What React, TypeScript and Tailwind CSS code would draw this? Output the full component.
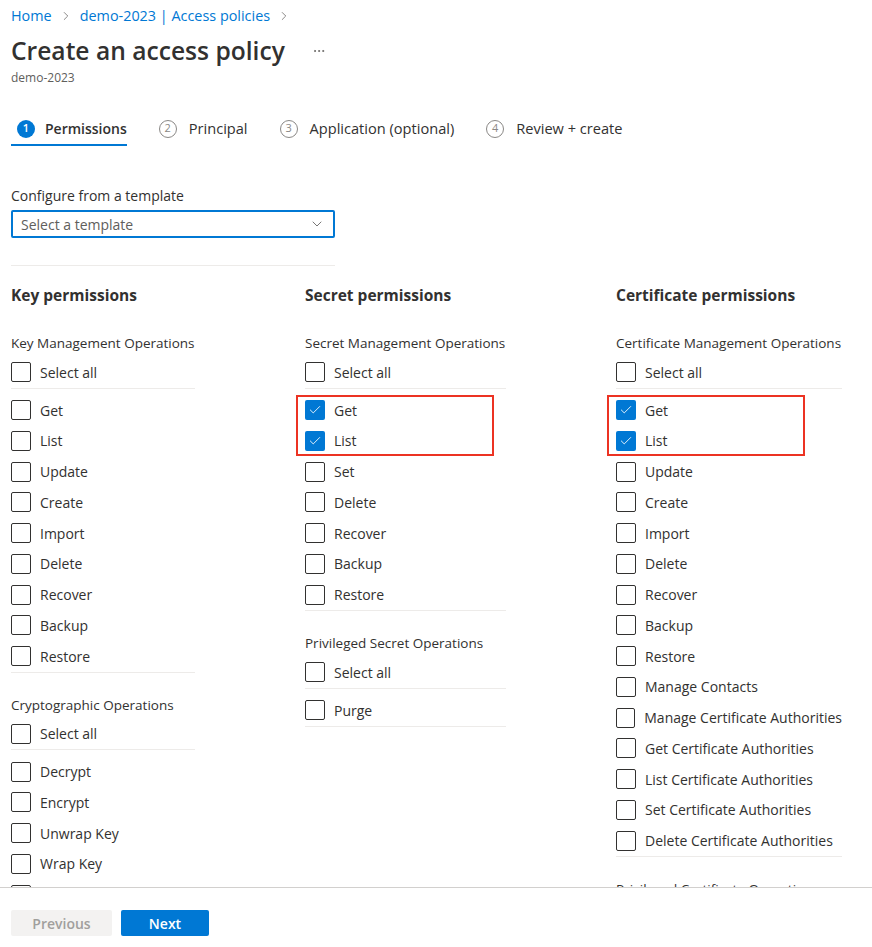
import { Check, ChevronDown, ChevronRight, Ellipsis } from 'lucide-react';

interface Group {
  label: string;
  items: string[];
}

interface Column {
  title: string;
  width: string;
  groups: Group[];
}

const checked = new Set(['Secret permissions/Get', 'Secret permissions/List', 'Certificate permissions/Get', 'Certificate permissions/List']);

const columns: Column[] = [
  {
    title: 'Key permissions',
    width: 'w-[184px]',
    groups: [
      {
        label: 'Key Management Operations',
        items: ['Get', 'List', 'Update', 'Create', 'Import', 'Delete', 'Recover', 'Backup', 'Restore'],
      },
      {
        label: 'Cryptographic Operations',
        items: ['Decrypt', 'Encrypt', 'Unwrap Key', 'Wrap Key', 'Verify', 'Sign'],
      },
    ],
  },
  {
    title: 'Secret permissions',
    width: 'w-[201px]',
    groups: [
      {
        label: 'Secret Management Operations',
        items: ['Get', 'List', 'Set', 'Delete', 'Recover', 'Backup', 'Restore'],
      },
      { label: 'Privileged Secret Operations', items: ['Purge'] },
    ],
  },
  {
    title: 'Certificate permissions',
    width: 'w-[226px]',
    groups: [
      {
        label: 'Certificate Management Operations',
        items: [
          'Get',
          'List',
          'Update',
          'Create',
          'Import',
          'Delete',
          'Recover',
          'Backup',
          'Restore',
          'Manage Contacts',
          'Manage Certificate Authorities',
          'Get Certificate Authorities',
          'List Certificate Authorities',
          'Set Certificate Authorities',
          'Delete Certificate Authorities',
        ],
      },
      { label: 'Privileged Certificate Operations', items: ['Purge'] },
    ],
  },
];

const tabs = ['Permissions', 'Principal', 'Application (optional)', 'Review + create'];

const Checkbox = ({ label, on }: { label: string; on?: boolean }) => (
  <div className="flex h-[30.75px] items-center gap-[9px]">
    {on ? (
      <span className="flex h-5 w-5 items-center justify-center rounded-[2px] bg-[#0078d4]">
        <Check className="h-[14px] w-[14px] text-white" strokeWidth={1.5} />
      </span>
    ) : (
      <span className="h-5 w-5 rounded-[2px] border border-[#323130] bg-white" />
    )}
    <span className="whitespace-nowrap">{label}</span>
  </div>
);

const PermissionColumn = ({ col }: { col: Column }) => (
  <div className={`${col.width} shrink-0`}>
    <h2 className="h-[22px] text-[15.5px] font-bold leading-[22px] whitespace-nowrap">{col.title}</h2>
    {col.groups.map((g, gi) => (
      <div key={g.label} className={gi === 0 ? 'mt-[27px]' : 'mt-[22px]'}>
        <div className="h-5 text-[13.5px] leading-5 whitespace-nowrap">{g.label}</div>
        <div className="mt-[4px] border-b border-[#edebe9]">
          <Checkbox label="Select all" />
        </div>
        <div className="mt-[6px] border-b border-[#edebe9]">
          {g.items.map((item, i) => {
            // Get + List are boxed together in the screenshot
            if (i === 1 && checked.has(`${col.title}/${item}`)) return null;
            if (i === 0 && checked.has(`${col.title}/${item}`)) {
              return (
                <div key={item} className="relative">
                  <Checkbox label={item} on />
                  <Checkbox label={g.items[1]} on />
                  <div className="pointer-events-none absolute -left-[9px] top-0 h-full w-[198px] border-2 border-[#ec3323]" />
                </div>
              );
            }
            return <Checkbox key={item} label={item} />;
          })}
        </div>
      </div>
    ))}
  </div>
);

export default function App() {
  return (
    <div className="flex h-[947px] flex-col overflow-hidden bg-white font-['Open_Sans',sans-serif] text-[14px] text-[#323130]">
      <div className="flex-1 overflow-hidden pl-[11px]">
        {/* Breadcrumb */}
        <div className="mt-[6px] flex h-5 items-center text-[14.4px] text-[#0078d4]">
          <span>Home</span>
          <ChevronRight className="mx-[7px] h-[14px] w-[14px] text-[#605e5c]" strokeWidth={1.25} />
          <span>demo-2023 | Access policies</span>
          <ChevronRight className="mx-[7px] h-[14px] w-[14px] text-[#605e5c]" strokeWidth={1.25} />
        </div>

        {/* Title */}
        <div className="mt-[9px] flex h-8 items-center">
          <h1 className="text-[24.6px] font-semibold leading-8">Create an access policy</h1>
          <Ellipsis className="ml-[27px] h-[14px] w-[14px] text-[#605e5c]" strokeWidth={1.5} />
        </div>
        <div className="mt-[3px] h-4 text-[12px] leading-4 text-[#605e5c]">demo-2023</div>

        {/* Wizard tabs */}
        <div className="mt-[27px] flex gap-[26px]">
          {tabs.map((t, i) => (
            <div key={t} className="flex flex-col">
              <div className={`flex h-[31px] items-center pl-[6px] ${i === 0 ? 'gap-[10px]' : 'gap-[12px]'}`}>
                {i === 0 ? (
                  <span className="flex h-[18px] w-[18px] items-center justify-center rounded-full bg-[#0078d4] text-[11px] font-semibold text-white">
                    1
                  </span>
                ) : (
                  <span className="flex h-[18px] w-[18px] items-center justify-center rounded-full border border-[#8a8886] text-[11px] text-[#8a8886]">
                    {i + 1}
                  </span>
                )}
                <span className={i === 0 ? 'text-[14px] font-semibold' : 'text-[14.6px]'}>{t}</span>
              </div>
              <div className={`h-[2px] ${i === 0 ? 'bg-[#0078d4]' : ''}`} />
            </div>
          ))}
        </div>

        {/* Template */}
        <div className="mt-[40px] h-5 leading-5">Configure from a template</div>
        <div className="mt-[4px] flex h-[28px] w-[324px] items-center justify-between rounded-[2px] border-2 border-[#0078d4] pl-[8px] pr-[8px] text-[#605e5c]">
          <span>Select a template</span>
          <ChevronDown className="h-4 w-4 text-[#323130]" strokeWidth={1} />
        </div>
        <div className="mt-[27px] h-px w-[324px] bg-[#edebe9]" />

        {/* Permission columns */}
        <div className="mt-[18px] flex gap-[110px]">
          {columns.map((c) => (
            <PermissionColumn key={c.title} col={c} />
          ))}
        </div>
      </div>

      {/* Footer */}
      <div className="h-[60px] shrink-0 border-t border-[#d2d0ce] pl-[11px] pt-[22px]">
        <div className="flex gap-[9px]">
          <button className="h-[26px] w-[101px] rounded-[2px] bg-[#f3f2f1] text-[14px] font-semibold text-[#a19f9d]">
            Previous
          </button>
          <button className="h-[26px] w-[88px] rounded-[2px] bg-[#0078d4] text-[14px] font-semibold text-white">
            Next
          </button>
        </div>
      </div>
    </div>
  );
}
